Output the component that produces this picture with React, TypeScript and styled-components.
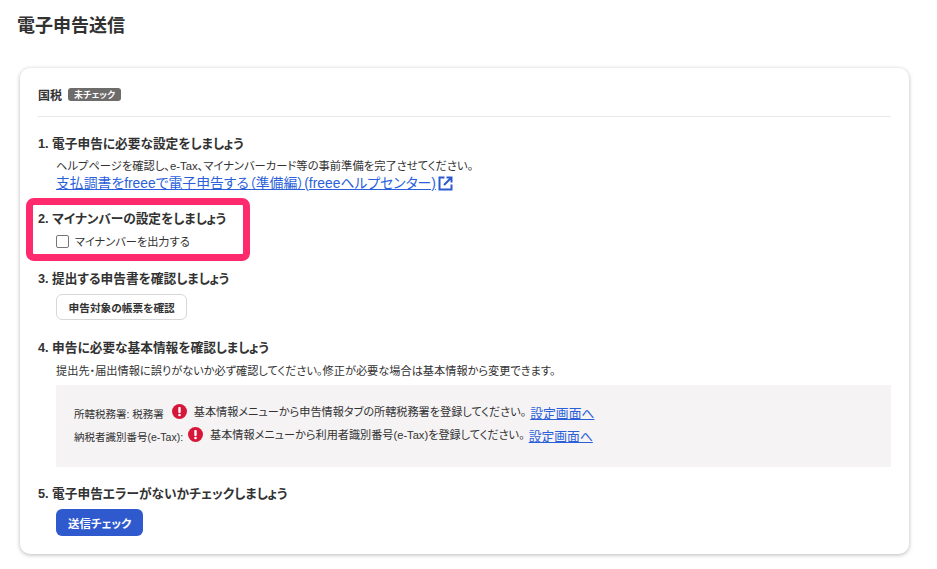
import React from 'react';
import styled, { createGlobalStyle } from 'styled-components';

const GlobalStyle = createGlobalStyle`
  html, body {
    margin: 0;
    padding: 0;
    background: #ffffff;
  }
  body {
    font-family: "Liberation Sans", "Noto Sans CJK JP", sans-serif;
    color: #323232;
    font-feature-settings: "palt";
  }
`;

const Page = styled.div`
  width: 937px;
  height: 569px;
  box-sizing: border-box;
  padding: 16px 28px 0 20px;
  overflow: hidden;
`;

const PageTitle = styled.h1`
  margin: 0 0 31px -3px;
  font-size: 18px;
  line-height: 21px;
  font-weight: 700;
`;

const Card = styled.section`
  height: 486px;
  box-sizing: border-box;
  padding: 0 18px;
  background: #ffffff;
  border-radius: 10px;
  box-shadow: 0 1px 4px rgba(0, 0, 0, 0.28);
`;

const CardHeader = styled.div`
  height: 49px;
  padding-top: 5px;
  box-sizing: border-box;
  display: flex;
  align-items: center;
  gap: 6px;
  border-bottom: 1px solid #e8e8e8;
`;

const HeaderLabel = styled.span`
  font-size: 12px;
  font-weight: 700;
`;

const Badge = styled.span`
  display: inline-flex;
  align-items: center;
  height: 13px;
  padding: 0 6px;
  border-radius: 3px;
  background: #6e6b6b;
  color: #ffffff;
  font-size: 9px;
  font-weight: 700;
`;

const Step = styled.div<{ $top: number }>`
  position: relative;
  margin-top: ${(p) => p.$top}px;
`;

const StepTitle = styled.h2`
  margin: 0;
  font-size: 12.7px;
  line-height: 18px;
  font-weight: 700;
`;

const StepBody = styled.div<{ $top?: number }>`
  margin: ${(p) => p.$top ?? 0}px 0 0 18px;
`;

const Description = styled.p<{ $size: number }>`
  margin: 0;
  font-size: ${(p) => p.$size}px;
  line-height: 14px;
`;

const HelpLink = styled.a`
  display: inline-flex;
  align-items: center;
  gap: 2px;
  font-size: 13.85px;
  line-height: 20px;
  color: #2b5fd9;
  text-decoration: underline;
`;

const Highlight = styled.div`
  position: absolute;
  left: -12px;
  top: -12px;
  width: 224px;
  height: 63px;
  box-sizing: border-box;
  border: 7px solid #ff2a6d;
  border-radius: 8px;
  pointer-events: none;
`;

const CheckRow = styled.label`
  display: flex;
  align-items: center;
  gap: 6px;
  font-size: 11.2px;
  line-height: 16px;
`;

const CheckBox = styled.span`
  width: 13px;
  height: 13px;
  box-sizing: border-box;
  border: 1px solid #767676;
  border-radius: 2px;
  background: #ffffff;
  position: relative;
  top: -1px;
`;

const Button = styled.button<{ $primary?: boolean }>`
  display: block;
  height: ${(p) => (p.$primary ? 27 : 26)}px;
  padding: 0 ${(p) => (p.$primary ? 12 : 11.5)}px;
  border-radius: 6px;
  font-family: inherit;
  font-feature-settings: inherit;
  font-size: ${(p) => (p.$primary ? 11.4 : 10.7)}px;
  font-weight: 700;
  color: ${(p) => (p.$primary ? '#ffffff' : '#323232')};
  background: ${(p) => (p.$primary ? '#2f5acd' : '#ffffff')};
  border: ${(p) => (p.$primary ? 'none' : '1px solid #d7d7d7')};
`;

const InfoPanel = styled.div`
  height: 82px;
  margin-top: 7px;
  box-sizing: border-box;
  padding: 15px 18px 0;
  background: #f5f3f4;
`;

const InfoRow = styled.div`
  display: flex;
  align-items: center;
  height: 23px;
  gap: 6px;
`;

const InfoLabel = styled.span<{ $trail: number }>`
  font-size: 10.5px;
  position: relative;
  top: 2px;
  margin-right: ${(p) => p.$trail}px;
`;

const InfoText = styled.span`
  font-size: 11.15px;
  margin-left: 1px;
  position: relative;
  top: -1px;
`;

const SettingsLink = styled.a`
  font-size: 12.8px;
  color: #2b5fd9;
  text-decoration: underline;
  position: relative;
  top: 1px;
  margin-left: -2px;
`;

const ExternalIcon = () => (
  <svg width="15" height="15" viewBox="0 0 15 15" fill="none" stroke="#2f5acd" strokeWidth="2">
    <path d="M6.5 1.5H1.5v12h12V8.5" />
    <path d="M8.5 1.5h5v5M13.5 1.5L6 9" />
  </svg>
);

const AlertIcon = () => (
  <svg width="15" height="15" viewBox="0 0 15 15">
    <circle cx="7.5" cy="7.5" r="7.5" fill="#d7173a" />
    <rect x="6.3" y="3" width="2.4" height="6" rx="0.8" fill="#ffffff" />
    <circle cx="7.5" cy="11" r="1.3" fill="#ffffff" />
  </svg>
);

export default function App() {
  return (
    <Page>
      <GlobalStyle />
      <PageTitle>電子申告送信</PageTitle>
      <Card>
        <CardHeader>
          <HeaderLabel>国税</HeaderLabel>
          <Badge>未チェック</Badge>
        </CardHeader>

        <Step $top={18}>
          <StepTitle>1. 電子申告に必要な設定をしましょう</StepTitle>
          <StepBody $top={6}>
            <Description $size={11.3}>ヘルプページを確認し、e-Tax、マイナンバーカード等の事前準備を完了させてください。</Description>
            <HelpLink href="#">
              支払調書をfreeeで電子申告する（準備編）(freeeヘルプセンター)
              <ExternalIcon />
            </HelpLink>
          </StepBody>
        </Step>

        <Step $top={17}>
          <Highlight />
          <StepTitle>2. マイナンバーの設定をしましょう</StepTitle>
          <StepBody $top={6}>
            <CheckRow>
              <CheckBox />
              マイナンバーを出力する
            </CheckRow>
          </StepBody>
        </Step>

        <Step $top={20}>
          <StepTitle>3. 提出する申告書を確認しましょう</StepTitle>
          <StepBody $top={6}>
            <Button>申告対象の帳票を確認</Button>
          </StepBody>
        </Step>

        <Step $top={19}>
          <StepTitle>4. 申告に必要な基本情報を確認しましょう</StepTitle>
          <StepBody $top={7}>
            <Description $size={11.2}>提出先・届出情報に誤りがないか必ず確認してください。修正が必要な場合は基本情報から変更できます。</Description>
            <InfoPanel>
              <InfoRow>
                <InfoLabel $trail={2}>所轄税務署: 税務署</InfoLabel>
                <AlertIcon />
                <InfoText>基本情報メニューから申告情報タブの所轄税務署を登録してください。</InfoText>
                <SettingsLink href="#">設定画面へ</SettingsLink>
              </InfoRow>
              <InfoRow>
                <InfoLabel $trail={-1}>納税者識別番号(e-Tax):</InfoLabel>
                <AlertIcon />
                <InfoText>基本情報メニューから利用者識別番号(e-Tax)を登録してください。</InfoText>
                <SettingsLink href="#">設定画面へ</SettingsLink>
              </InfoRow>
            </InfoPanel>
          </StepBody>
        </Step>

        <Step $top={18}>
          <StepTitle>5. 電子申告エラーがないかチェックしましょう</StepTitle>
          <StepBody $top={6}>
            <Button $primary>送信チェック</Button>
          </StepBody>
        </Step>
      </Card>
    </Page>
  );
}
